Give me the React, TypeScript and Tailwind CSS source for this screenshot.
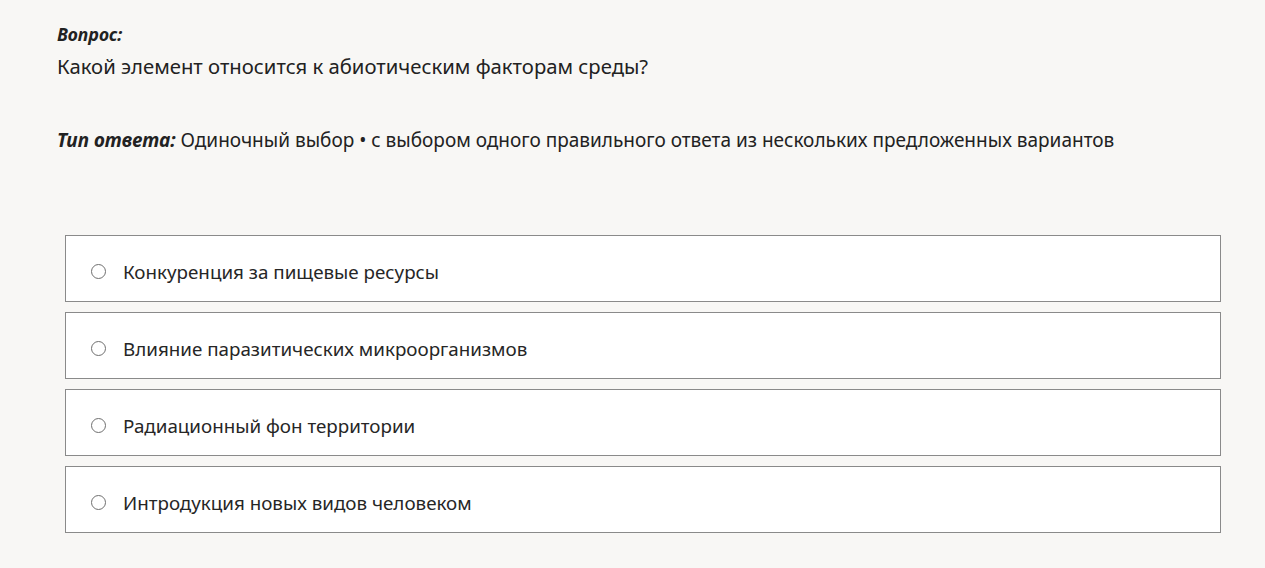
import React from "react";

const options = [
  "Конкуренция за пищевые ресурсы",
  "Влияние паразитических микроорганизмов",
  "Радиационный фон территории",
  "Интродукция новых видов человеком",
];

export default function App() {
  return (
    <div
      className="min-h-[568px] w-full bg-[#f8f7f5] text-[#222]"
      style={{ fontFamily: '"Noto Sans", "Open Sans", sans-serif' }}
    >
      <div className="pl-[57px] pr-[44px] pt-[21px]">
        <div className="text-[17.6px] font-bold italic leading-[26px] text-[#222]">Вопрос:</div>
        <div className="mt-[5px] text-[20.3px] leading-[28px] text-[#222]">
          Какой элемент относится к абиотическим факторам среды?
        </div>
        <div className="mt-[46px] text-[19px] leading-[28px] text-[#222]">
          <span className="font-bold italic">Тип ответа:</span> Одиночный выбор • с выбором одного
          правильного ответа из нескольких предложенных вариантов
        </div>
        <div className="mt-[81px] ml-[8px] flex flex-col gap-[10px]">
          {options.map((o) => (
            <div
              key={o}
              className="flex h-[67px] items-center border border-[#8a8a8a] bg-white pl-[25px] pt-[6px]"
            >
              <span className="h-[15px] w-[15px] rounded-full border-[1.5px] border-[#6f6f6f] bg-white" />
              <span className="ml-[17px] text-[18.8px] leading-[26px] text-[#262626]">{o}</span>
            </div>
          ))}
        </div>
      </div>
    </div>
  );
}
